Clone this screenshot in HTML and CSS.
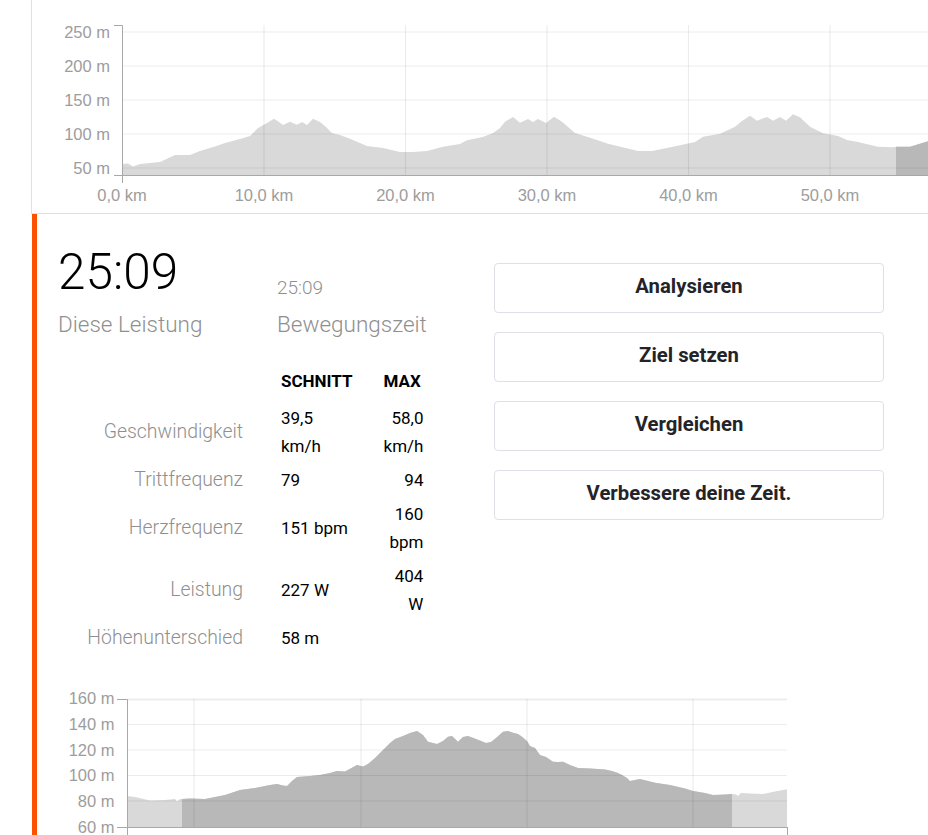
FILE: index.html
```html
<!DOCTYPE html>
<html lang="de">
<head>
<meta charset="utf-8">
<title>Segment</title>
<link rel="stylesheet" href="styles.css">
</head>
<body>
<div class="elev-card">
  <svg class="elev-svg" width="896" height="213" viewBox="32 0 896 213">
    <defs>
      <clipPath id="hiTop"><rect x="896" y="0" width="40" height="213"/></clipPath>
    </defs>
    <g class="area">
      <path class="fill-light" d="M122,175 L122,164 128,163.5 133,166.5 140,164 150,163 160,162 175,155 190,155 200,151 215,146.5 225,143 240,139 250,136 258,128 267,123 274,118.7 279,122 283,125 290,121.7 297,124.7 302,122 307,125 313,118.7 320,122 326,127 332,133 340,135 350,138.7 367,146 383,148 400,152 413,152 427,151 443,146.7 460,144 467,140.3 483,137 493,133 500,128 505,121.7 513,117 520,122.7 528,119 533,122 538,119 546,123 554,116.7 562,121.7 575,133 590,137.7 600,141 608,143.7 638,151 652,151 673,146.7 695,142 703,136.7 720,133.7 735,126.7 742,121 750,115.7 757,120.7 767,117 773,120.7 780,117 786,120.7 793,114.3 800,117.3 810,126.7 823,133.3 838,136 847,140 858,142 878,146.7 893,147.3 896,146.7 910,146.7 928,141.3 L928,175 Z"/>
      <path class="fill-dark" clip-path="url(#hiTop)" d="M122,175 L122,164 893,147.3 896,146.7 910,146.7 928,141.3 L928,175 Z"/>
    </g>
    <g class="grid">
      <line x1="122" y1="32" x2="928" y2="32"/>
      <line x1="122" y1="66" x2="928" y2="66"/>
      <line x1="122" y1="100" x2="928" y2="100"/>
      <line x1="122" y1="134" x2="928" y2="134"/>
      <line x1="122" y1="168" x2="928" y2="168"/>
      <line x1="264" y1="25" x2="264" y2="175"/>
      <line x1="405.5" y1="25" x2="405.5" y2="175"/>
      <line x1="547" y1="25" x2="547" y2="175"/>
      <line x1="688.5" y1="25" x2="688.5" y2="175"/>
      <line x1="830" y1="25" x2="830" y2="175"/>
    </g>
    <g class="axis">
      <path d="M114,25.5 H122.5 V175.5 H114"/>
      <path d="M122.5,175.5 V183"/>
      <path d="M122,175.5 H928"/>
    </g>
    <g class="ticks-y">
      <text x="110" y="38">250 m</text>
      <text x="110" y="72">200 m</text>
      <text x="110" y="106">150 m</text>
      <text x="110" y="140">100 m</text>
      <text x="110" y="174">50 m</text>
    </g>
    <g class="ticks-x">
      <text x="122" y="201">0,0 km</text>
      <text x="264" y="201">10,0 km</text>
      <text x="405.5" y="201">20,0 km</text>
      <text x="547" y="201">30,0 km</text>
      <text x="688.5" y="201">40,0 km</text>
      <text x="830" y="201">50,0 km</text>
    </g>
  </svg>
</div>

<section class="effort">
  <div class="effort-row">
    <div class="effort-main">
      <div class="stats">
        <div class="stat stat-primary">
          <div class="stat-value stat-value-big">25:09</div>
          <div class="stat-label">Diese Leistung</div>
        </div>
        <div class="stat">
          <div class="stat-value stat-value-small">25:09</div>
          <div class="stat-label">Bewegungszeit</div>
        </div>
      </div>

      <table class="metrics">
        <colgroup>
          <col class="col-label">
          <col class="col-avg">
          <col class="col-max">
        </colgroup>
        <thead>
          <tr class="row-head">
            <th></th>
            <th class="cell-avg">Schnitt</th>
            <th class="cell-max head-max">Max</th>
          </tr>
        </thead>
        <tbody>
          <tr>
            <td class="cell-label">Geschwindigkeit</td>
            <td class="cell-avg">39,5<br>km/h</td>
            <td class="cell-max">58,0<br>km/h</td>
          </tr>
          <tr>
            <td class="cell-label">Trittfrequenz</td>
            <td class="cell-avg">79</td>
            <td class="cell-max">94</td>
          </tr>
          <tr>
            <td class="cell-label">Herzfrequenz</td>
            <td class="cell-avg">151 bpm</td>
            <td class="cell-max">160<br>bpm</td>
          </tr>
          <tr>
            <td class="cell-label">Leistung</td>
            <td class="cell-avg">227 W</td>
            <td class="cell-max">404<br>W</td>
          </tr>
          <tr>
            <td class="cell-label">Höhenunterschied</td>
            <td class="cell-avg">58 m</td>
            <td class="cell-max"></td>
          </tr>
        </tbody>
      </table>
    </div>

    <div class="actions">
      <button class="btn" type="button">Analysieren</button>
      <button class="btn" type="button">Ziel setzen</button>
      <button class="btn" type="button">Vergleichen</button>
      <button class="btn" type="button">Verbessere deine Zeit.</button>
    </div>
  </div>

  <svg class="effort-chart" width="891" height="155" viewBox="37 680 891 155">
    <defs>
      <clipPath id="hiBottom"><rect x="182" y="680" width="550" height="160"/></clipPath>
    </defs>
    <g class="area">
      <path class="fill-light" d="M127,827 L127,796 135,797 150,800.5 165,800 175,799 177,801.5 180,799 190,798.5 205,799 215,797 225,795 240,790 255,788 270,785 277,784 283,785.5 287,786 292,781 297,777 310,776 320,775 330,773 337,771 345,771.5 357,765 363,766.5 368,764 375,758 383,750 390,743 395,739 403,736 410,733 417,731 423,735 428,741.7 437,744 443,741 448,736.7 452,736 458,741.7 463,737 468,736 476,739 486,743 491,742 496,738 503,731.7 508,731 513,732.7 518,734 522,736.7 527,741 530,746 535,748 540,755 546,757 553,761.7 558,762 563,761.7 570,765 578,768 590,768.5 605,769.5 612,771 618,773 622,775 627,778 630,781 635,780 640,779 648,781 655,782.7 670,785 685,788.5 693,791 705,793 713,795 725,794.5 732,794 736,794.5 738,796 741,793 750,793.5 763,794 775,791.5 787,789.3 L787,827 Z"/>
      <path class="fill-dark" clip-path="url(#hiBottom)" d="M127,827 L127,796 135,797 150,800.5 165,800 175,799 177,801.5 180,799 190,798.5 205,799 215,797 225,795 240,790 255,788 270,785 277,784 283,785.5 287,786 292,781 297,777 310,776 320,775 330,773 337,771 345,771.5 357,765 363,766.5 368,764 375,758 383,750 390,743 395,739 403,736 410,733 417,731 423,735 428,741.7 437,744 443,741 448,736.7 452,736 458,741.7 463,737 468,736 476,739 486,743 491,742 496,738 503,731.7 508,731 513,732.7 518,734 522,736.7 527,741 530,746 535,748 540,755 546,757 553,761.7 558,762 563,761.7 570,765 578,768 590,768.5 605,769.5 612,771 618,773 622,775 627,778 630,781 635,780 640,779 648,781 655,782.7 670,785 685,788.5 693,791 705,793 713,795 725,794.5 732,794 736,794.5 738,796 741,793 750,793.5 763,794 775,791.5 787,789.3 L787,827 Z"/>
    </g>
    <g class="grid">
      <line x1="127" y1="699.5" x2="787" y2="699.5" class="grid-top"/>
      <line x1="127" y1="724.5" x2="787" y2="724.5"/>
      <line x1="127" y1="750" x2="787" y2="750"/>
      <line x1="127" y1="775.5" x2="787" y2="775.5"/>
      <line x1="127" y1="801" x2="787" y2="801"/>
      <line x1="194" y1="699" x2="194" y2="827"/>
      <line x1="361" y1="699" x2="361" y2="827"/>
      <line x1="527" y1="699" x2="527" y2="827"/>
      <line x1="693" y1="699" x2="693" y2="827"/>
    </g>
    <g class="axis">
      <path d="M117,699.5 H127.5 V827.5 H117"/>
      <path d="M127.5,827.5 V835 M787.5,827.5 V835"/>
      <path d="M127,827.5 H788"/>
    </g>
    <g class="ticks-y">
      <text x="114.5" y="704">160 m</text>
      <text x="114.5" y="730">140 m</text>
      <text x="114.5" y="755.5">120 m</text>
      <text x="114.5" y="781">100 m</text>
      <text x="114.5" y="806.5">80 m</text>
      <text x="114.5" y="832.5">60 m</text>
    </g>
  </svg>
</section>
</body>
</html>
```

FILE: styles.css
```css
html, body {
  margin: 0;
  padding: 0;
  background: #ffffff;
}

body {
  width: 928px;
  height: 835px;
  overflow: hidden;
  font-family: Roboto, "Liberation Sans", Arial, sans-serif;
  color: #000000;
}

/* ---------- top elevation card ---------- */
.elev-card {
  margin-left: 31px;
  height: 213px;
  border-left: 1px solid #dfdfe8;
  border-bottom: 1px solid #dfdfe8;
  overflow: hidden;
}

.elev-svg,
.effort-chart {
  display: block;
}

.fill-light {
  fill: #d9d9d9;
}

.fill-dark {
  fill: #b8b8b8;
}

.grid line {
  stroke: rgba(0, 0, 0, 0.075);
  stroke-width: 1.2;
}

.grid .grid-top {
  stroke-width: 2;
}

.axis path {
  fill: none;
  stroke: #a8a8a8;
  stroke-width: 1;
}

.ticks-y text,
.ticks-x text {
  font-family: "Liberation Sans", Arial, sans-serif;
  font-size: 16.5px;
  fill: #9d9d9d;
}

.ticks-y text {
  text-anchor: end;
}

.ticks-x text {
  text-anchor: middle;
}

/* ---------- effort section ---------- */
.effort {
  margin-left: 32px;
  border-left: 5px solid #fc5200;
}

.effort-row {
  display: flex;
  padding-left: 21px;
}

.effort-main {
  flex: 1;
  padding-top: 33.5px;
}

.stats {
  display: flex;
  align-items: flex-end;
}

.stat-primary {
  width: 219px;
}

.stat-value {
  line-height: 1;
}

.stat-value-big {
  font-size: 49.5px;
  font-weight: 300;
  color: #000000;
}

.stat-value-small {
  font-size: 19px;
  font-weight: 300;
  color: #8f8f8f;
}

.stat-label {
  margin-top: 15px;
  font-size: 22.5px;
  font-weight: 300;
  line-height: 24px;
  color: #8f8f8f;
}

/* ---------- metrics table ---------- */
.metrics {
  margin-top: 28px;
  border-collapse: collapse;
  border-spacing: 0;
  table-layout: fixed;
}

.col-label {
  width: 185px;
}

.col-avg {
  width: 109px;
}

.col-max {
  width: 70px;
}

.metrics th,
.metrics td {
  padding: 3px 0;
  line-height: 28px;
  vertical-align: middle;
}

.metrics th {
  padding-bottom: 6px;
  font-size: 17px;
  font-weight: 700;
  text-transform: uppercase;
  text-align: left;
}

.metrics td {
  font-size: 17px;
}

.metrics .cell-label {
  text-align: right;
  font-size: 19.4px;
  font-weight: 300;
  color: #8f8f8f;
}

.metrics .cell-avg {
  padding-left: 38px;
  text-align: left;
}

.metrics .cell-max {
  padding-left: 31px;
  text-align: right;
}

.metrics .head-max {
  text-align: left;
}

/* ---------- actions ---------- */
.actions {
  width: 390px;
  margin-right: 44px;
  padding-top: 49px;
  display: flex;
  flex-direction: column;
  gap: 19px;
}

.btn {
  height: 50px;
  margin: 0;
  padding: 0 16px 5px;
  border: 1px solid #dfdfe8;
  border-radius: 4px;
  background: #ffffff;
  font-family: Roboto, "Liberation Sans", Arial, sans-serif;
  font-size: 20.3px;
  font-weight: 700;
  color: #242428;
  text-align: center;
  cursor: pointer;
}

/* ---------- bottom chart ---------- */
.effort-chart {
  margin-top: 25px;
}
```
